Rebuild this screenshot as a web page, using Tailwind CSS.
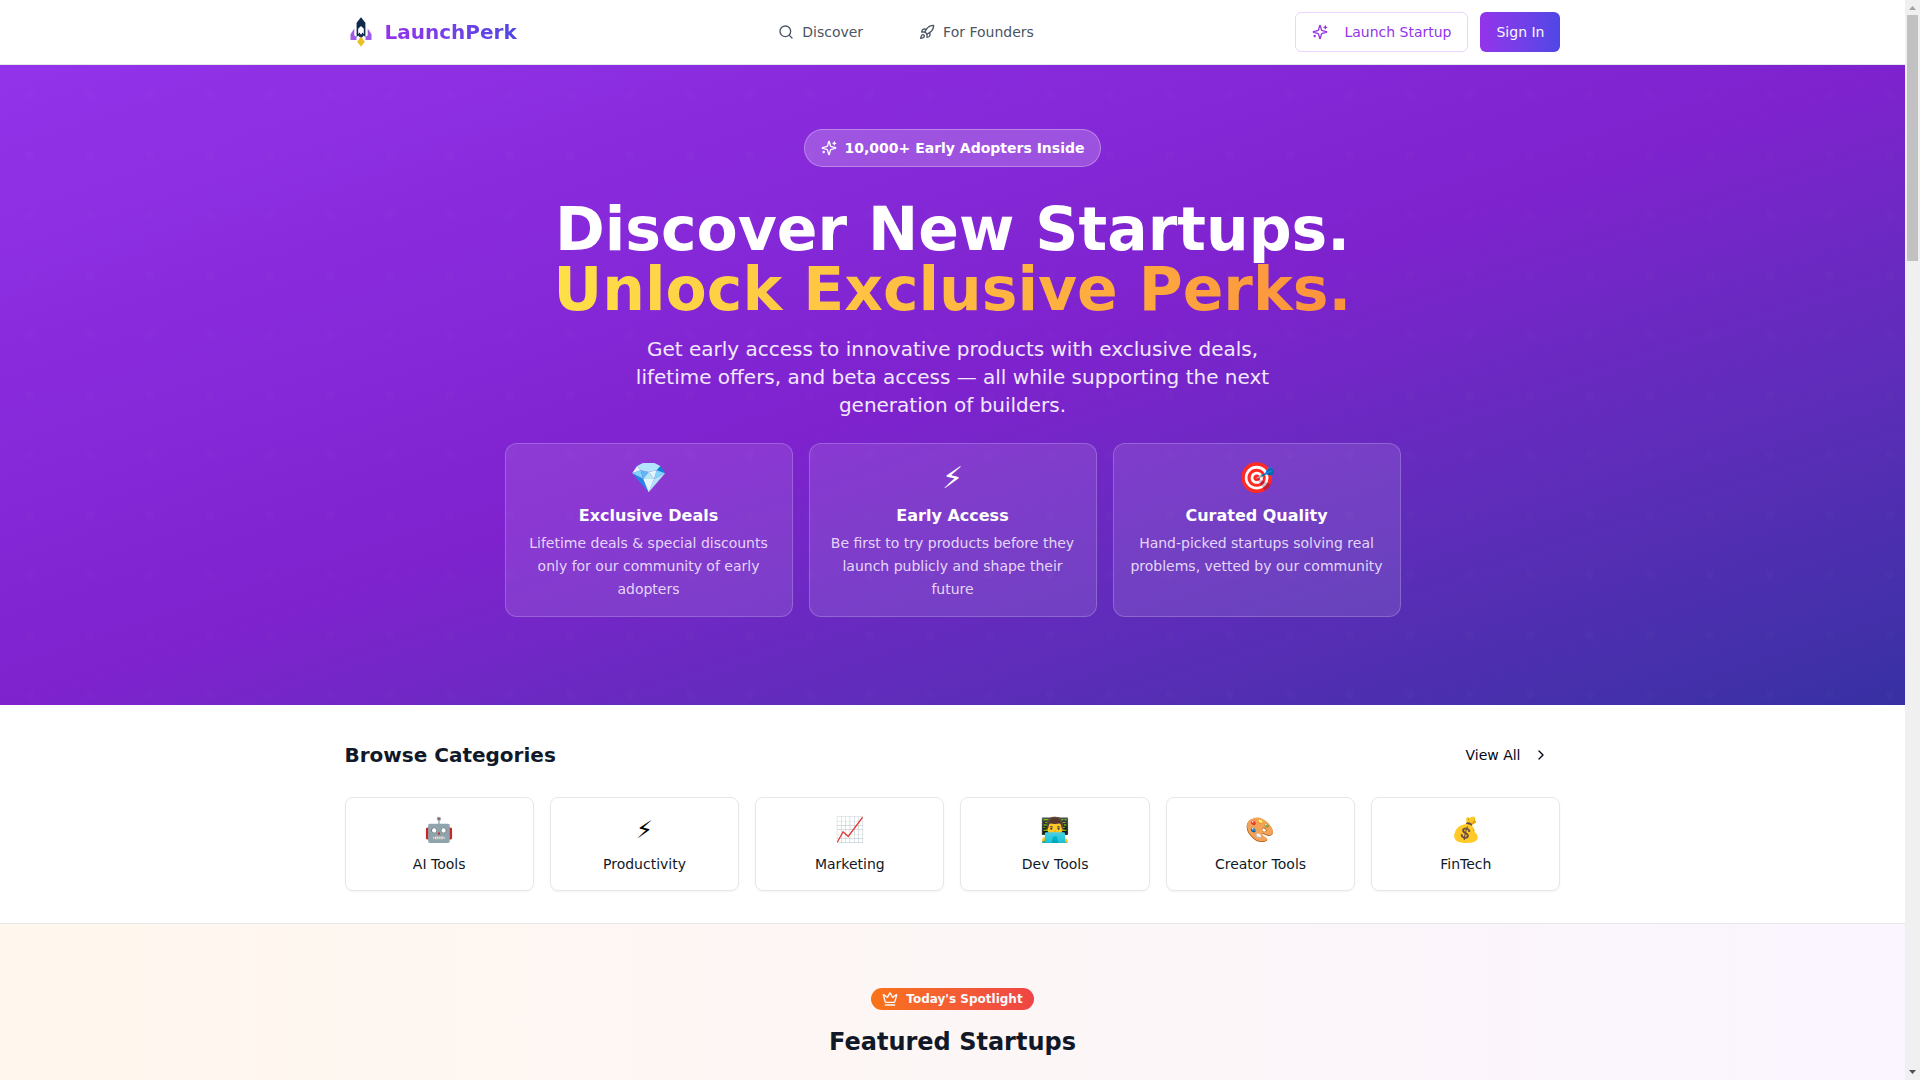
<!DOCTYPE html>
<html lang="en">
<head>
    <meta charset="UTF-8">
    <meta name="viewport" content="width=device-width, initial-scale=1.0">
    <title>LaunchPerk</title>
    <script src="https://cdn.jsdelivr.net/npm/@tailwindcss/browser@4"></script>
    <style>
        body {
            font-family: 'DejaVu Sans', sans-serif;
        }
    </style>
</head>
<body class="flex h-[1080px] overflow-hidden bg-white text-[#020817]">

    <!-- icons -->
    <svg class="hidden">
        <symbol id="sparkles" viewBox="0 0 24 24" fill="none" stroke="currentColor" stroke-width="2" stroke-linecap="round" stroke-linejoin="round">
            <path d="M9.937 15.5A2 2 0 0 0 8.5 14.063l-6.135-1.582a.5.5 0 0 1 0-.962L8.5 9.936A2 2 0 0 0 9.937 8.5l1.582-6.135a.5.5 0 0 1 .963 0L14.063 8.5A2 2 0 0 0 15.5 9.937l6.135 1.581a.5.5 0 0 1 0 .964L15.5 14.063a2 2 0 0 0-1.437 1.437l-1.582 6.135a.5.5 0 0 1-.963 0z"/>
            <path d="M20 3v4"/><path d="M22 5h-4"/><path d="M4 17v2"/><path d="M5 18H3"/>
        </symbol>
    </svg>

    <div class="flex w-[1905px] shrink-0 flex-col">
        <header class="h-[65px] shrink-0 border-b border-[#e5e7eb] bg-white">
            <div class="mx-auto flex h-16 max-w-7xl items-center justify-between px-8">
                <a class="flex items-center gap-2">
                    <svg class="size-8" viewBox="0 0 32 32">
                        <path d="M16 1.2 11.6 6.8v14.4l1.6-1.6L16 22.4l2.8-2.8 1.6 1.6V6.8z" fill="#0f2a4d"/>
                        <path d="M16 10 13.2 12.8v5.4l1.2-1.6 1.6 2.2 1.6-2.2 1.2 1.6v-5.4z" fill="#fff"/>
                        <path d="M9.3 12.6v6.9l2.2 1.2V24h-6v-5.8z" fill="#a05ce8"/>
                        <path d="M22.7 12.6v6.9l-2.2 1.2V24h6v-5.8z" fill="#a05ce8"/>
                        <path d="M16 20.6 19.8 25.8 16 30.8 12.2 25.8z" fill="#e9c026"/>
                    </svg>
                    <span class="bg-gradient-to-r from-[#9333ea] to-[#4f46e5] bg-clip-text text-xl font-bold text-transparent">LaunchPerk</span>
                </a>

                <nav class="flex items-center gap-14 text-sm text-[#4b5563]">
                    <a class="flex items-center gap-2">
                        <svg class="size-4" viewBox="0 0 24 24" fill="none" stroke="currentColor" stroke-width="2" stroke-linecap="round" stroke-linejoin="round"><circle cx="11" cy="11" r="8"/><path d="m21 21-4.3-4.3"/></svg>
                        <span>Discover</span>
                    </a>
                    <a class="flex items-center gap-2">
                        <svg class="size-4" viewBox="0 0 24 24" fill="none" stroke="currentColor" stroke-width="2" stroke-linecap="round" stroke-linejoin="round"><path d="M4.5 16.5c-1.5 1.26-2 5-2 5s3.74-.5 5-2c.71-.84.7-2.13-.09-2.91a2.18 2.18 0 0 0-2.91-.09z"/><path d="m12 15-3-3a22 22 0 0 1 2-3.95A12.88 12.88 0 0 1 22 2c0 2.72-.78 7.5-6 11a22.35 22.35 0 0 1-4 2z"/><path d="M9 12H4s.55-3.03 2-4c1.62-1.08 5 0 5 0"/><path d="M12 15v5s3.03-.55 4-2c1.08-1.62 0-5 0-5"/></svg>
                        <span>For Founders</span>
                    </a>
                </nav>

                <div class="flex items-center gap-3 text-sm">
                    <button class="flex h-10 items-center gap-4 rounded-md border border-[#e9d5ff] px-4 text-[#9333ea]">
                        <svg class="size-4"><use href="#sparkles"/></svg>
                        Launch Startup
                    </button>
                    <button class="h-10 rounded-md bg-gradient-to-r from-[#9333ea] to-[#4f46e5] px-4 text-[#f8fafc]">Sign In</button>
                </div>
            </div>
        </header>

        <!-- hero -->
        <section class="relative shrink-0 bg-gradient-to-br from-[#9333ea] via-[#7e22ce] to-[#3730a3] pt-16 pb-[88px] text-center text-white">
            <svg class="absolute inset-0 size-full">
                <pattern id="dots" width="60" height="60" patternUnits="userSpaceOnUse"><circle cx="30" cy="30" r="4" fill="#9c92ac" fill-opacity="0.025"/></pattern>
                <rect width="100%" height="100%" fill="url(#dots)"/>
            </svg>
            <div class="relative mx-auto flex max-w-4xl flex-col items-center">
                <div class="mb-8 flex items-center gap-2 rounded-full border border-white/30 bg-white/20 px-4 py-2 text-sm font-semibold">
                    <svg class="size-4"><use href="#sparkles"/></svg>
                    10,000+ Early Adopters Inside
                </div>
                <h1 class="mb-4 text-6xl leading-none font-bold">
                    Discover New Startups.
                    <span class="block bg-gradient-to-r from-[#fde047] to-[#fb923c] bg-clip-text text-transparent">Unlock Exclusive Perks.</span>
                </h1>
                <p class="mb-6 max-w-2xl text-xl leading-7 text-[#f3e8ff]">Get early access to innovative products with exclusive deals, lifetime offers, and beta access — all while supporting the next generation of builders.</p>
                <div class="grid w-full grid-cols-3 gap-4">
                    <div class="rounded-xl border border-white/20 bg-white/10 p-4">
                        <div class="mb-2 text-3xl leading-9">💎</div>
                        <h3 class="mb-1 font-semibold">Exclusive Deals</h3>
                        <p class="text-sm leading-relaxed text-[#f3e8ff]/90">Lifetime deals &amp; special discounts only for our community of early adopters</p>
                    </div>
                    <div class="rounded-xl border border-white/20 bg-white/10 p-4">
                        <div class="mb-2 text-3xl leading-9">⚡</div>
                        <h3 class="mb-1 font-semibold">Early Access</h3>
                        <p class="text-sm leading-relaxed text-[#f3e8ff]/90">Be first to try products before they launch publicly and shape their future</p>
                    </div>
                    <div class="rounded-xl border border-white/20 bg-white/10 p-4">
                        <div class="mb-2 text-3xl leading-9">🎯</div>
                        <h3 class="mb-1 font-semibold">Curated Quality</h3>
                        <p class="text-sm leading-relaxed text-[#f3e8ff]/90">Hand-picked startups solving real problems, vetted by our community</p>
                    </div>
                </div>
            </div>
        </section>

        <!-- categories -->
        <section class="shrink-0 border-b border-[#e5e7eb] bg-white py-8">
            <div class="mx-auto max-w-7xl px-8">
                <div class="mb-6 flex h-9 items-center justify-between">
                    <h2 class="text-xl font-bold text-[#111827]">Browse Categories</h2>
                    <button class="flex items-center gap-3 px-3 text-sm">
                        View All
                        <svg class="size-4" viewBox="0 0 24 24" fill="none" stroke="currentColor" stroke-width="2" stroke-linecap="round" stroke-linejoin="round"><path d="m9 18 6-6-6-6"/></svg>
                    </button>
                </div>
                <div class="grid grid-cols-6 gap-4 text-center text-sm text-[#111827]">
                    <div class="rounded-lg border border-[#e5e7eb] p-4 shadow-[0_1px_2px_0_rgb(0_0_0/0.05)]">
                        <div class="mb-2 text-2xl leading-8 text-black">🤖</div>
                        <div>AI Tools</div>
                    </div>
                    <div class="rounded-lg border border-[#e5e7eb] p-4 shadow-[0_1px_2px_0_rgb(0_0_0/0.05)]">
                        <div class="mb-2 text-2xl leading-8 text-black">⚡</div>
                        <div>Productivity</div>
                    </div>
                    <div class="rounded-lg border border-[#e5e7eb] p-4 shadow-[0_1px_2px_0_rgb(0_0_0/0.05)]">
                        <div class="mb-2 text-2xl leading-8 text-black">📈</div>
                        <div>Marketing</div>
                    </div>
                    <div class="rounded-lg border border-[#e5e7eb] p-4 shadow-[0_1px_2px_0_rgb(0_0_0/0.05)]">
                        <div class="mb-2 text-2xl leading-8 text-black">👨‍💻</div>
                        <div>Dev Tools</div>
                    </div>
                    <div class="rounded-lg border border-[#e5e7eb] p-4 shadow-[0_1px_2px_0_rgb(0_0_0/0.05)]">
                        <div class="mb-2 text-2xl leading-8 text-black">🎨</div>
                        <div>Creator Tools</div>
                    </div>
                    <div class="rounded-lg border border-[#e5e7eb] p-4 shadow-[0_1px_2px_0_rgb(0_0_0/0.05)]">
                        <div class="mb-2 text-2xl leading-8 text-black">💰</div>
                        <div>FinTech</div>
                    </div>
                </div>
            </div>
        </section>

        <!-- featured -->
        <section class="flex flex-1 flex-col items-center bg-gradient-to-r from-[#fff7ed] to-[#faf5ff] pt-16">
            <div class="mb-4 flex h-[22px] items-center gap-2 rounded-full bg-gradient-to-r from-[#f97316] to-[#ef4444] px-[11px] text-xs font-semibold text-[#f8fafc]">
                <svg class="size-4" viewBox="0 0 24 24" fill="none" stroke="currentColor" stroke-width="2" stroke-linecap="round" stroke-linejoin="round"><path d="M11.562 3.266a.5.5 0 0 1 .876 0L15.39 8.87a1 1 0 0 0 1.516.294L21.183 5.5a.5.5 0 0 1 .798.519l-2.834 10.246a1 1 0 0 1-.956.734H5.81a1 1 0 0 1-.957-.734L2.02 6.02a.5.5 0 0 1 .798-.519l4.276 3.664a1 1 0 0 0 1.516-.294z"/><path d="M5 21h14"/></svg>
                Today's Spotlight
            </div>
            <h2 class="text-2xl font-bold text-[#111827]">Featured Startups</h2>
        </section>
    </div>

    <!-- scrollbar -->
    <div class="flex h-full w-[15px] shrink-0 flex-col items-center bg-[#f0f0f0]">
        <svg class="h-[15px] w-[15px] shrink-0" viewBox="0 0 15 15"><path d="M4 10h7L7.5 6z" fill="#a3a3a3"/></svg>
        <div class="h-[246px] w-[11px] bg-[#c1c1c1]"></div>
        <svg class="mt-auto h-[15px] w-[15px] shrink-0" viewBox="0 0 15 15"><path d="M4 5h7L7.5 9z" fill="#505050"/></svg>
    </div>

</body>
</html>
